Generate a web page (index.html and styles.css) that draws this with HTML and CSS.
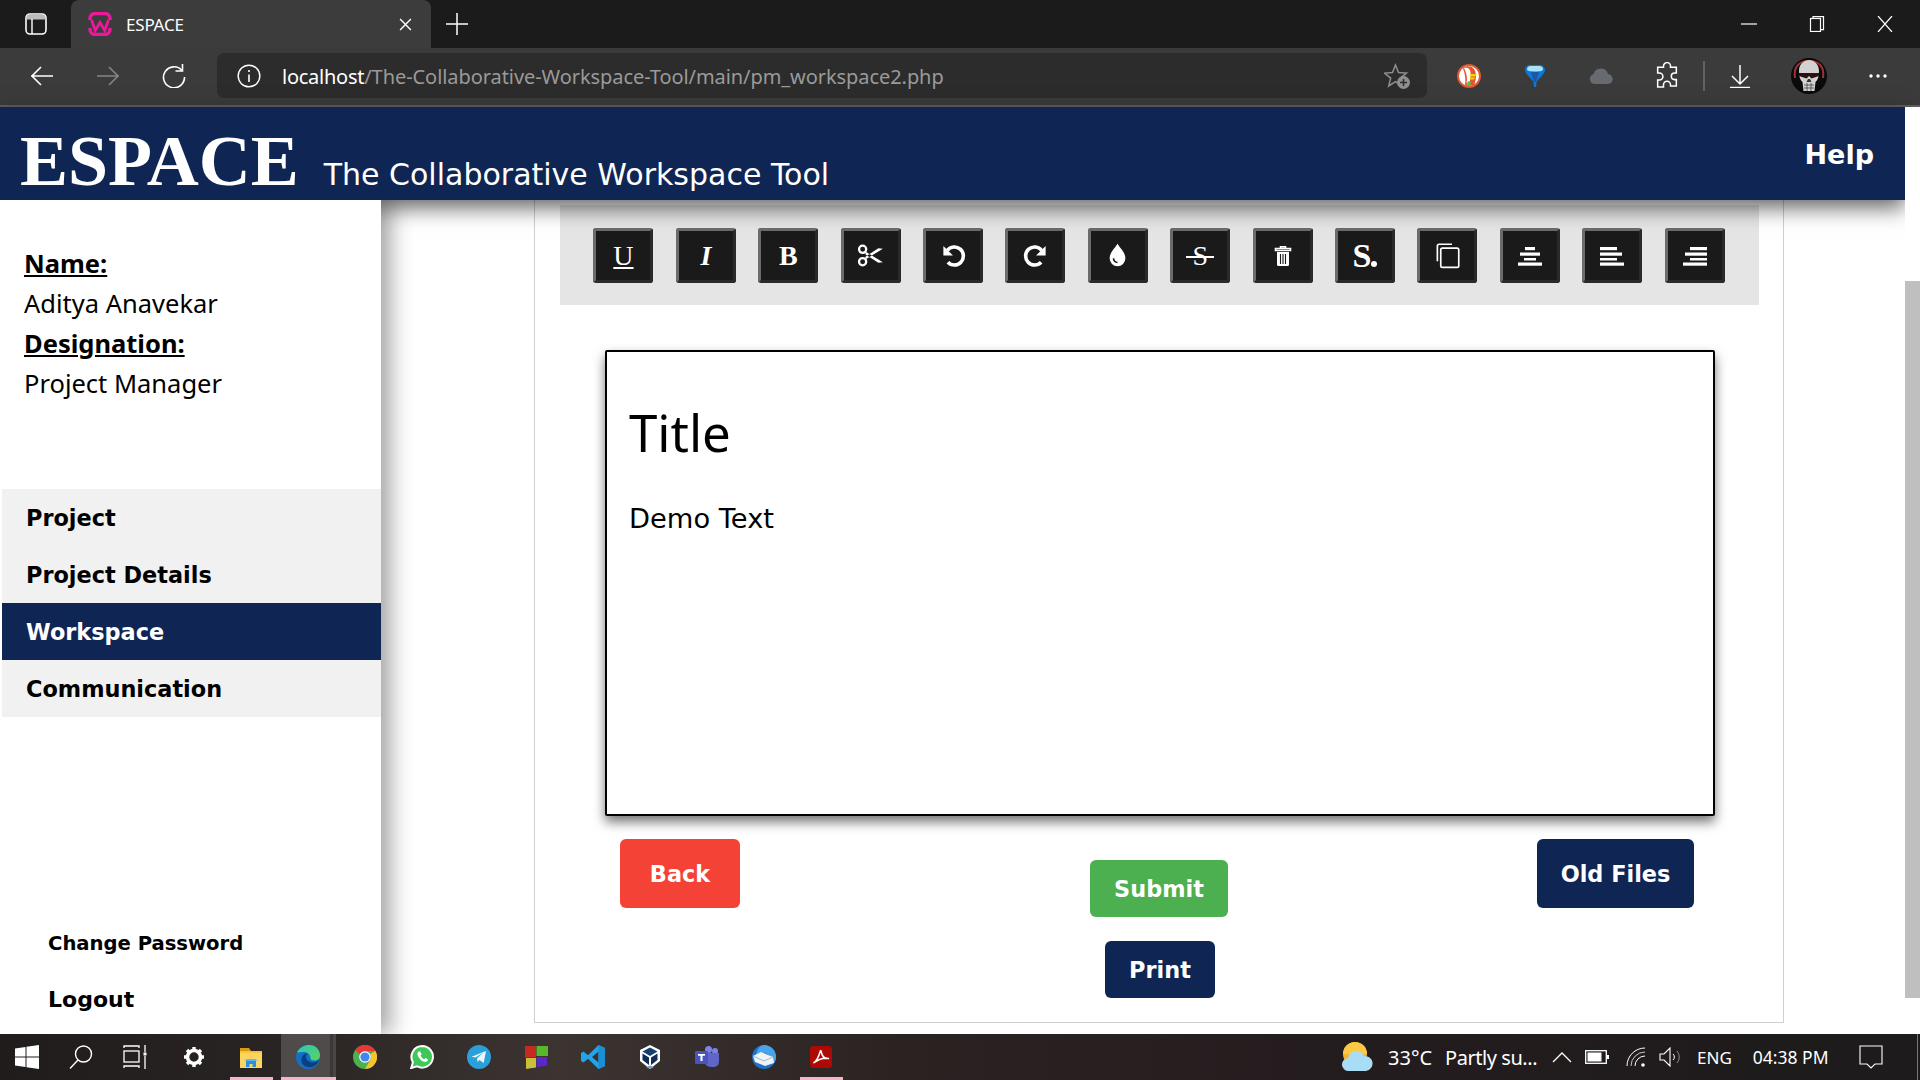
FILE: index.html
```html
<!DOCTYPE html>
<html lang="en">
<head>
<meta charset="utf-8">
<title>ESPACE</title>
<link rel="stylesheet" href="styles.css">
</head>
<body>
<div class="tabbar">
  <div class="tab-toggle"><svg class="i22" viewBox="0 0 24 24"><rect x="2" y="2" width="20" height="20" rx="4" fill="none" stroke="#fff" stroke-width="1.6"/><path d="M2.5 7.5V6a3.5 3.5 0 0 1 3.5-3.5h12A3.5 3.5 0 0 1 21.500 6v1.500z" fill="#bbb"/><path d="M8 7v15" stroke="#fff" stroke-width="1.400"/></svg></div>
  <div class="tab">
    <svg class="favicon" viewBox="0 0 24 24"><path d="M2 8V6.500A5 5 0 0 1 7 1.500h10a5 5 0 0 1 5 5V8M2 16v1.500a5 5 0 0 0 5 5h10a5 5 0 0 0 5-5V16" fill="none" stroke="#ec1a9a" stroke-width="3.400"/><path d="M3.500 8l3.800 10.500 4.700-8 4.700 8L20.500 8" fill="none" stroke="#ec1a9a" stroke-width="2.800"/></svg>
    <span class="tab-title">ESPACE</span>
    <svg class="tab-close" viewBox="0 0 12 12"><path d="M1 1l10 10M11 1L1 11" stroke="#fff" stroke-width="1.300"/></svg>
  </div>
  <svg class="tab-plus" viewBox="0 0 24 24"><path d="M12 1v22M1 12h22" stroke="#fff" stroke-width="1.500"/></svg>
  <div class="win-controls">
    <span class="win-btn"><svg class="i16" viewBox="0 0 16 16"><path d="M0 8h16" stroke="#fff" stroke-width="1.200"/></svg></span>
    <span class="win-btn"><svg class="i16" viewBox="0 0 16 16"><rect x="1.500" y="2.500" width="10" height="13" fill="#1b1b1b" stroke="#fff" stroke-width="1.200"/><path d="M4 2.500V.6h10.500v13h-3" fill="none" stroke="#fff" stroke-width="1.200"/></svg></span>
    <span class="win-btn"><svg class="i16" viewBox="0 0 16 16"><path d="M1 0l14 16M15 0L1 16" stroke="#fff" stroke-width="1.200"/></svg></span>
  </div>
</div>

<div class="toolbar">
  <span class="tool"><svg class="i24" viewBox="0 0 24 24"><path d="M23 12H1M11 3l-9 9 9 9" fill="none" stroke="#fff" stroke-width="1.600"/></svg></span>
  <span class="tool"><svg class="i24" viewBox="0 0 24 24"><path d="M1 12h22M13 3l9 9-9 9" fill="none" stroke="#858585" stroke-width="1.600"/></svg></span>
  <span class="tool"><svg class="i24" viewBox="0 0 24 24"><path d="M20 6.500A10.500 10.500 0 1 0 22.500 13" fill="none" stroke="#fff" stroke-width="1.600"/><path d="M20.500 0v7h-7" fill="none" stroke="#fff" stroke-width="1.600"/></svg></span>
  <div class="address">
    <svg class="i24" viewBox="0 0 24 24"><circle cx="12" cy="12" r="10.800" fill="none" stroke="#fff" stroke-width="1.400"/><path d="M12 10.500V18M12 6v2" stroke="#fff" stroke-width="1.600"/></svg>
    <span class="url"><span class="url-host">localhost</span>/The-Collaborative-Workspace-Tool/main/pm_workspace2.php</span>
    <svg class="star" viewBox="0 0 26 26"><path d="M11.500 2l3 7.500 8 .6-6.200 5 2 7.900-6.800-4.300-6.800 4.300 2-7.900-6.200-5 8-.6z" fill="none" stroke="#8f8f8f" stroke-width="1.500"/><circle cx="19.500" cy="19.500" r="6.500" fill="#8f8f8f"/><path d="M19.500 16v7M16 19.500h7" stroke="#2c2c2c" stroke-width="1.500"/></svg>
  </div>
  <span class="tool tool-first"><svg class="i24" viewBox="0 0 24 24"><circle cx="12" cy="12" r="12" fill="#de5833"/><circle cx="12" cy="12" r="10" fill="#fff"/><path d="M6 4.500c3-3 8-3 10.500 0 3 3 3.500 10 .5 17H8C9 15 8 10 6 4.500z" fill="#de5833"/><path d="M7 4c3-1 6 0 6.500 4 .5 4 0 8-1.500 11H9.500C11 14 9 8 7 4z" fill="#fff"/><path d="M13 10h7l-2 2.500h-5zM13 13.500h5l-1 2h-4z" fill="#fdd20a"/><path d="M9.500 19.500l2-2.500 2.500 1-1 4H10z" fill="#65bc46"/></svg></span>
  <span class="tool"><svg class="i24" viewBox="0 0 24 24"><path d="M2 6a5 5 0 0 1 5-5h10a5 5 0 0 1 5 5c0 4-6 8-8.500 12L13 23h-2l-.5-5C8 14 2 10 2 6z" fill="#0f78d6"/><path d="M4 5.500A3.500 3.500 0 0 1 7.500 2h9A3.500 3.500 0 0 1 20 5.500c0 1-2 2-8 2s-8-1-8-2z" fill="#a6e4fb"/><path d="M8 8h8l-3 10h-2z" fill="#1d57a8"/></svg></span>
  <span class="tool"><svg class="i24" viewBox="0 0 24 24"><path d="M5.500 20A5 5 0 0 1 4.500 10.200 7.500 7.500 0 0 1 19 10a5 5 0 0 1-.5 10z" fill="#676a6e"/></svg></span>
  <span class="tool"><svg class="puzzle" viewBox="0 0 24 24"><path d="M9 5V4a3 3 0 0 1 6 0v1h5v5h-1.500a2.800 2.800 0 0 0 0 5.600H20V21h-5v-1a3 3 0 0 0-6 0v2H4v-6h1.500a3 3 0 0 0 0-6H4V5z" fill="none" stroke="#fff" stroke-width="1.300" transform="translate(0 -.5)"/></svg></span>
  <span class="tool-sep"></span>
  <span class="tool"><svg class="i24" viewBox="0 0 24 24"><path d="M12 1v18M4 12l8 8 8-8" fill="none" stroke="#fff" stroke-width="1.500"/><path d="M2 23.500h20" stroke="#fff" stroke-width="1.500"/></svg></span>
  <span class="tool tool-gap"><svg class="avatar" viewBox="0 0 36 36"><circle cx="18" cy="18" r="18" fill="#0a0a0a"/><path d="M4 20C2 8 9 3 18 3s16 5 14 17" fill="none" stroke="#a03232" stroke-width="2"/><path d="M8 13C8 6 13 2 18 2s10 4 10 11c0 5-1 9-3.500 11l-1 9h-11l-1-9C9 22 8 18 8 13z" fill="#d2d2d2"/><path d="M8 15h20v3l-7.500 2.500L18 18l-2.500 2.500L8 18z" fill="#2a1212"/><path d="M17 21h2l1.500 3h-5z" fill="#333"/><path d="M13 27h10M13 30h10M16 25v8M20 25v8" stroke="#555" stroke-width=".9"/></svg></span>
  <span class="tool tool-gap"><svg class="i24" viewBox="0 0 24 24"><circle cx="5" cy="12" r="1.700" fill="#fff"/><circle cx="12" cy="12" r="1.700" fill="#fff"/><circle cx="19" cy="12" r="1.700" fill="#fff"/></svg></span>
</div>

<div class="app">
  <div class="page">
    <header class="site-header">
      <h1 class="brand">ESPACE</h1>
      <span class="tagline">The Collaborative Workspace Tool</span>
      <a class="help">Help</a>
    </header>
    <div class="layout">
      <aside class="sidebar">
        <div class="profile">
          <div class="profile-label">Name:</div>
          <div>Aditya Anavekar</div>
          <div class="profile-label">Designation:</div>
          <div>Project Manager</div>
        </div>
        <nav class="nav">
          <a class="nav-item">Project</a>
          <a class="nav-item">Project Details</a>
          <a class="nav-item nav-active">Workspace</a>
          <a class="nav-item">Communication</a>
        </nav>
        <div class="side-foot">
          <a class="foot-small">Change Password</a>
          <a class="foot-large">Logout</a>
        </div>
      </aside>
      <main class="main">
        <section class="box">
          <div class="format-bar">
            <button class="fmt fmt-u">U</button>
            <button class="fmt fmt-i">I</button>
            <button class="fmt fmt-b">B</button>
            <button class="fmt"><svg class="i26" viewBox="0 0 24 24"><g fill="none" stroke="#fff" stroke-width="2"><circle cx="5" cy="6.500" r="3.200"/><circle cx="5" cy="17.500" r="3.200"/></g><path d="M7.500 8.500L23 18l-4 .5L7.500 11zM7.500 15.500L23 6l-4-.5L7.500 13z" fill="#fff"/></svg></button>
            <button class="fmt"><svg class="i26" viewBox="0 0 24 24"><path d="M6.500 7.500A8 8 0 1 1 7 18" fill="none" stroke="#fff" stroke-width="3.200"/><path d="M3 3.500v8.500h8.500z" fill="#fff"/></svg></button>
            <button class="fmt"><svg class="i26 flip" viewBox="0 0 24 24"><path d="M6.500 7.500A8 8 0 1 1 7 18" fill="none" stroke="#fff" stroke-width="3.200"/><path d="M3 3.500v8.500h8.500z" fill="#fff"/></svg></button>
            <button class="fmt"><svg class="i26" viewBox="0 0 24 24"><path d="M12 1.500c2.800 4.500 7 8 7 13a7 7 0 0 1-14 0c0-5 4.200-8.500 7-13z" fill="#fff"/><path d="M8.500 14.500a3.500 3.500 0 0 0 3.500 3.700" fill="none" stroke="#1a1a1a" stroke-width="1.400"/></svg></button>
            <button class="fmt"><span class="fmt-strike">S</span></button>
            <button class="fmt"><svg class="i24" viewBox="0 0 24 24"><path d="M9.500 4V2.800h5V4M4.500 4.500h15v2h-15z" fill="none" stroke="#fff" stroke-width="1.600"/><path d="M6 8h12v12.500a1.500 1.500 0 0 1-1.500 1.500h-9A1.500 1.500 0 0 1 6 20.500z" fill="#fff"/><path d="M9.500 10v10M12 10v10M14.500 10v10" stroke="#1a1a1a" stroke-width="1.100"/></svg></button>
            <button class="fmt fmt-sd">S<span class="fmt-dot"></span></button>
            <button class="fmt"><svg class="i26" viewBox="0 0 24 24" fill="none" stroke="#fff" stroke-width="1.500"><path d="M3 17V3.500A1.500 1.500 0 0 1 4.500 2H16"/><rect x="6" y="5.500" width="16" height="17" rx="1.500"/></svg></button>
            <button class="fmt"><svg class="i24" viewBox="0 0 24 24" fill="#fff"><rect x="7" y="3" width="10" height="3.200"/><rect x="2" y="8.500" width="20" height="3.200"/><rect x="6" y="14" width="12" height="2.500"/><rect x="0" y="18.500" width="24" height="3.200"/></svg></button>
            <button class="fmt"><svg class="i24" viewBox="0 0 24 24" fill="#fff"><rect x="0" y="3" width="17" height="3.200"/><rect x="0" y="8.500" width="22" height="3.200"/><rect x="0" y="14" width="17" height="2.500"/><rect x="0" y="18.500" width="24" height="3.200"/></svg></button>
            <button class="fmt"><svg class="i24" viewBox="0 0 24 24" fill="#fff"><rect x="7" y="3" width="17" height="3.200"/><rect x="2" y="8.500" width="22" height="3.200"/><rect x="7" y="14" width="17" height="2.500"/><rect x="0" y="18.500" width="24" height="3.200"/></svg></button>
          </div>
          <div class="editor">
            <div class="editor-title">Title</div>
            <div class="editor-text">Demo Text</div>
          </div>
          <div class="actions">
            <button class="btn btn-back">Back</button>
            <button class="btn btn-submit">Submit</button>
            <button class="btn btn-old">Old Files</button>
          </div>
          <button class="btn btn-print">Print</button>
        </section>
      </main>
    </div>
  </div>
  <div class="scrollbar"><div class="thumb"></div></div>
</div>

<footer class="taskbar">
  <span class="task task-sys"><svg class="i24" viewBox="0 0 24 24" fill="#fff"><path d="M0 3.500l10.500-1.500v9.500H0zM11.500 1.800L24 0v11.500H11.500zM0 12.500h10.500V22L0 20.500zM11.500 12.500H24V24l-12.500-1.800z"/></svg></span>
  <span class="task task-sys"><svg class="i24" viewBox="0 0 24 24" fill="none" stroke="#fff" stroke-width="1.400"><circle cx="14.500" cy="9" r="8"/><path d="M9 15L1 23.500"/></svg></span>
  <span class="task task-sys"><svg class="i24" viewBox="0 0 24 24" fill="none" stroke="#fff" stroke-width="1.300"><path d="M1 3V1h15v2M1 23v-2h15v2"/><rect x="1" y="6" width="15" height="11"/><path d="M22 0v7M22 11v13"/><rect x="20.500" y="7.500" width="3" height="3" fill="#fff" stroke="none"/></svg></span>
  <span class="task task-gear"><svg class="i24" viewBox="0 0 24 24"><circle cx="12" cy="12" r="6.500" fill="none" stroke="#fff" stroke-width="3.600"/><path d="M12 2v3M12 19v3M2 12h3M19 12h3M5 5l2 2M17 17l2 2M19 5l-2 2M7 17l-2 2" stroke="#fff" stroke-width="3.400"/></svg></span>
  <span class="task task-open"><svg class="i24" viewBox="0 0 24 24"><path d="M1 3h9l2 3H1z" fill="#d99b14"/><path d="M1 6h22v17H1z" fill="#fcd45f"/><path d="M1 6h22v2H1z" fill="#f5c53c"/><path d="M7 22v-6h10v6h-3.500v-3h-3v3z" fill="#2b8fdc"/><path d="M5.500 16l2-2h9l2 2z" fill="#60b7ef"/></svg></span>
  <span class="task task-edge task-open"><svg class="i24" viewBox="0 0 24 24"><defs><linearGradient id="edgeA" x1="0" y1="0" x2="1" y2="1"><stop offset="0" stop-color="#32c4b4"/><stop offset="1" stop-color="#5ad35f"/></linearGradient></defs><circle cx="12" cy="12" r="12" fill="#1171c9"/><path d="M1 7.500C4 1.500 10 0 13 0c7 0 11 5 11 10.500 0 3-2.500 5-5.500 5-2 0-4-1-4-2 0-4-3-6.500-6.500-6.500-3.500 0-6 1-7 0z" fill="url(#edgeA)"/><path d="M11 22c-4-1-6.500-5-5.500-9 1-3 3.500-5 6-4.500-1.500 1.500-2 3.500-1 5.500 1.500 3 5.500 4 8.500 3 1.500-.5 3-1.500 4-2.500-1 4-5 9-12 7.500z" fill="#0c3f82"/></svg></span>
  <span class="task"><svg class="i24" viewBox="0 0 24 24"><circle cx="12" cy="12" r="12" fill="#4caf50"/><path d="M12 0a12 12 0 0 1 10.400 6H12a6 6 0 0 0-5.200 3L2.100 5.300A12 12 0 0 1 12 0z" fill="#e53935"/><path d="M22.400 6A12 12 0 0 1 12 24l5.200-9A6 6 0 0 0 17.200 9z" fill="#fbc02d"/><circle cx="12" cy="12" r="5.800" fill="#fff"/><circle cx="12" cy="12" r="4.600" fill="#4285f4"/></svg></span>
  <span class="task"><svg class="i24" viewBox="0 0 24 24"><path d="M12.200 1a10.800 10.800 0 0 0-9.300 16.200L1.200 23l6-1.600A10.800 10.800 0 1 0 12.200 1z" fill="#3ec85a" stroke="#fff" stroke-width="2"/><path d="M8.500 6.500c-1.300 1-1.500 3 0 5.500 1.500 2.500 4 5 6.500 5 1.500 0 3-1 3-2.500l-2.500-1.500-1.300 1.200c-1.500-.5-3-2-3.700-3.700l1.200-1.300-1.500-2.700z" fill="#fff"/></svg></span>
  <span class="task"><svg class="i24" viewBox="0 0 24 24"><circle cx="12" cy="12" r="12" fill="#2b9fd8"/><path d="M4.500 11.800L19 6l-2.300 12-4.200-3-2 2-.4-3.800 6.400-5.700-8 5z" fill="#eaf6fb"/></svg></span>
  <span class="task"><svg class="i24" viewBox="0 0 24 24"><path d="M1 1h11v11.500H1z" fill="#c62a20"/><path d="M12.500 1H24v10H12.500z" fill="#58b82c"/><path d="M2 13h10v9.500L2 24z" fill="#c9bf3a"/><path d="M12.500 12H23v8.500l-10.500 1.800z" fill="#5b27c7"/></svg></span>
  <span class="task"><svg class="i24" viewBox="0 0 24 24"><path d="M17.500 0L24 3v18l-6.500 3L7 13.800 2.500 17.500 0 16V8l2.500-1.500L7 10.200zM17.500 6.500L11 12l6.500 5.500z" fill="#23a3ea"/><path d="M17.500 0L24 3v18l-6.500 3z" fill="#1a8fd6"/></svg></span>
  <span class="task"><svg class="i24" viewBox="0 0 24 24"><path d="M12 0l10 5v11l-10 8-10-8V5z" fill="#fff"/><path d="M4.500 6.500L12 2.500l7.500 4L12 11z" fill="#173f6e"/><path d="M4.500 8.500L11 12.500v7.500l-6.500-5zM19.500 8.500L13 12.500v7.500l6.500-5z" fill="#0e2c55"/><path d="M8 22l4 2 4-2-4-1.500z" fill="#7e9cc6"/></svg></span>
  <span class="task"><svg class="i24" viewBox="0 0 24 24"><circle cx="20" cy="6" r="3" fill="#7b83eb"/><circle cx="13.500" cy="4.500" r="3.500" fill="#7b83eb"/><path d="M9 8h15v9a5 5 0 0 1-5 5h-3a7 7 0 0 1-7-7z" fill="#5f66c8"/><rect x="0" y="6" width="13" height="13" rx="1.200" fill="#4b53bc"/><path d="M3 9h7v1.800H7.500V16h-2v-5.200H3z" fill="#fff"/></svg></span>
  <span class="task"><svg class="i24" viewBox="0 0 24 24"><circle cx="12" cy="12" r="12" fill="#1f6fc4"/><path d="M12 0a12 12 0 0 1 12 12c0 3-1 5-2 6-1-5-5-9-10-10-3-.5-6 0-8 2C5 4 8 0 12 0z" fill="#4aa3e8"/><path d="M1 11l8-4 12 5 1 6-9 3-10-4z" fill="#eef3f8"/><path d="M1 11l11 5 9-4" fill="none" stroke="#a9b8c7" stroke-width="1"/></svg></span>
  <span class="task task-open"><svg class="i24" viewBox="0 0 24 24"><rect x="1" y="1" width="22" height="22" rx="3.500" fill="#ad0a06"/><path d="M4.500 18c2.500-1.500 5-5.500 6.500-11 .5-2 1-2 1.300 0 .7 4 3 7 7.700 6.500-4.500-1-11 1-15.500 4.500z" fill="none" stroke="#fff" stroke-width="1.500"/></svg></span>
  <div class="tray">
    <svg class="weather" viewBox="0 0 32 32"><circle cx="14" cy="13" r="12" fill="#f7b52b"/><path d="M2 13a12 12 0 0 1 24 0z" fill="#fbc945"/><path d="M8 30a6.500 6.500 0 0 1-1-13 8.500 8.500 0 0 1 16-2 7.500 7.500 0 0 1 2 15z" fill="#a9dcf5"/></svg>
    <span class="temp">33°C</span>
    <span class="cond">Partly su...</span>
    <svg class="tray-chev" viewBox="0 0 20 12"><path d="M1 11l9-9 9 9" fill="none" stroke="#fff" stroke-width="1.300"/></svg>
    <svg class="tray-batt" viewBox="0 0 24 14"><rect x=".7" y=".7" width="20.600" height="12.600" fill="none" stroke="#fff" stroke-width="1.300"/><rect x="2.500" y="2.500" width="14" height="9" fill="#fff"/><rect x="22" y="5" width="2" height="4" fill="#fff"/></svg>
    <svg class="tray-wifi" viewBox="0 0 20 20"><g fill="none" stroke="#fff" stroke-width="1"><path d="M1 19A18 18 0 0 1 19 1"/><path d="M5 19A14 14 0 0 1 19 5" opacity=".75"/><path d="M9 19A10 10 0 0 1 19 9"/></g><circle cx="17" cy="18" r="1.800" fill="#fff"/></svg>
    <svg class="tray-vol" viewBox="0 0 22 20"><path d="M1 7h4l6-6v18l-6-6H1z" fill="none" stroke="#fff" stroke-width="1.100"/><path d="M14 7a4 4 0 0 1 0 6" fill="none" stroke="#fff"/><path d="M18 4a9 9 0 0 1 0 12" fill="none" stroke="#888"/></svg>
    <span class="eng">ENG</span>
    <span class="clock">04:38 PM</span>
    <svg class="tray-note" viewBox="0 0 24 24"><path d="M1 1h22v18h-7l-4 4-4-4H1z" fill="none" stroke="#fff" stroke-width="1.100"/></svg>
    <span class="show-desk"></span>
  </div>
</footer>
</body>
</html>
```
FILE: styles.css
```css
* { box-sizing: border-box; }
html, body { margin: 0; height: 100%; }
body {
  width: 1920px; height: 1080px; overflow: hidden;
  display: flex; flex-direction: column;
  background: #fff; color: #000;
  font-family: "Noto Sans", sans-serif;
}
svg { display: block; flex: none; }
.i16 { width: 16px; height: 16px; }
.i22 { width: 24px; height: 24px; }
.i24 { width: 24px; height: 24px; }
.i26 { width: 27px; height: 27px; }
.puzzle { width: 28px; height: 28px; }
.flip { transform: scaleX(-1); }

.tabbar { height: 48px; flex: none; display: flex; align-items: center; background: #1b1b1b; }
.tab-toggle { width: 71px; display: flex; justify-content: center; padding-right: 0; }
.tab {
  width: 360px; height: 48px; background: #3c3c3c; border-radius: 8px 8px 0 0;
  display: flex; align-items: center; padding-left: 17px; color: #fff;
}
.favicon { width: 24px; height: 24px; }
.tab-title { margin-left: 14px; font-size: 17px; letter-spacing: -.2px; }
.tab-close { width: 13px; height: 13px; margin-left: auto; margin-right: 19px; }
.tab-plus { width: 24px; height: 24px; margin-left: 14px; }
.win-controls { margin-left: auto; display: flex; margin-right: 1px; }
.win-btn { width: 68px; display: flex; justify-content: center; }

.toolbar {
  height: 59px; flex: none; display: flex; align-items: center; padding: 0 0 2px 9px;
  background: #3b3b3b; border-bottom: 2px solid #5f5f5f;
}
.tool { width: 66px; display: flex; justify-content: center; flex: none; }
.tool-first { margin-left: 9px; }
.tool-gap { margin-left: 3px; }
.tool-sep { width: 7px; height: 30px; flex: none; display: flex; justify-content: center; }
.tool-sep::before { content: ""; width: 2px; background: #636363; }
.avatar { width: 36px; height: 36px; }
.address {
  width: 1210px; height: 45px; margin-left: 10px; flex: none; padding: 0 17px 0 20px;
  display: flex; align-items: center; background: #2c2c2c; border-radius: 7px; color: #a0a0a0;
}
.url { margin: 2px 0 0 21px; font-size: 20px; letter-spacing: -.07px; white-space: nowrap; color: #9a9a9a; }
.url-host { color: #fff; letter-spacing: -.25px; }
.star { width: 26px; height: 26px; margin-left: auto; }

.app { flex: 1; min-height: 0; display: flex; }
.page { width: 1905px; flex: none; display: flex; flex-direction: column; min-height: 0; }
.scrollbar { width: 15px; flex: none; background: #fff; position: relative; z-index: 3; padding-top: 174px; }
.thumb { height: 717px; background: #bfbfbf; }

.site-header {
  height: 93px; flex: none; display: flex; align-items: flex-end; position: relative; z-index: 2;
  background: #0f2654; color: #fff; padding: 0 31px 0 20px;
  box-shadow: 0 8px 20px rgba(0,0,0,.6);
}
.brand { margin: 0 0 -1px; font: bold 72px/80px "Liberation Serif", serif; }
.tagline { margin: 0 0 5px 25px; font: 30px/40px "DejaVu Sans", sans-serif; }
.help { margin: 0 0 25px auto; font: bold 27px/40px "DejaVu Sans", sans-serif; }

.layout { flex: 1; min-height: 0; display: flex; }
.sidebar {
  width: 381px; flex: none; display: flex; flex-direction: column; background: #fff; position: relative; z-index: 3;
  box-shadow: 10px 0 20px rgba(0,0,0,.35);
  clip-path: inset(0 -60px 0 0);
}
.profile { padding: 43px 0 0 24px; font-size: 25.5px; line-height: 40px; }
.profile-label { font-weight: 700; text-decoration: underline; }
.nav { margin: 86px 0 0 2px; display: flex; flex-direction: column; }
.nav-item {
  height: 57px; padding-left: 24px; display: flex; align-items: center;
  background: #f1f1f1; font: bold 22.4px "DejaVu Sans", sans-serif;
}
.nav-active { background: #0f2654; color: #fff; }
.side-foot { margin-top: auto; padding: 0 0 7px 48px; display: flex; flex-direction: column; font-family: "DejaVu Sans", sans-serif; font-weight: 700; }
.foot-small { height: 55px; display: flex; align-items: center; font-size: 19.6px; }
.foot-large { height: 56px; display: flex; align-items: center; font-size: 22px; }

.main { flex: 1; min-width: 0; padding-left: 153px; background: #fff; }
.box {
  width: 1250px; height: 823px; padding-top: 5px; display: flex; flex-direction: column; align-items: center;
  border: 1px solid #cfcfcf; border-top: 0;
}
.format-bar {
  width: 1199px; height: 100px; flex: none; background: #e5e5e5;
  display: flex; align-items: center; justify-content: center; gap: 22.4px; padding-top: 1px;
}
.fmt {
  width: 60px; height: 55px; padding: 0; flex: none; display: flex; align-items: center; justify-content: center;
  background: #1a1a1a; color: #fff; border: 3px solid; border-color: #6b6b6b #2a2a2a #2a2a2a #6b6b6b; border-radius: 3px;
  font: bold 28px "Liberation Serif", serif;
}
.fmt-u { text-decoration: underline; font-weight: 400; }
.fmt-i { font-style: italic; }
.fmt-strike { position: relative; font-weight: 400; font-size: 28px; line-height: 30px; }
.fmt-strike::after { content: ""; position: absolute; left: -6px; right: -6px; top: 15px; height: 2px; background: #fff; }
.fmt-sd { font: 900 34px "Liberation Serif", serif; align-items: baseline; padding-top: 6px; }
.fmt-dot { width: 6px; height: 6px; border-radius: 50%; background: #fff; }

.editor {
  width: 1110px; height: 466px; margin: 45px 0 0 2px; flex: none; padding: 0 22px;
  background: #fff; border: 2px solid #000; border-radius: 2px;
  box-shadow: 0 6px 12px rgba(0,0,0,.55);
}
.editor-title { margin-top: 56px; font-size: 51px; line-height: 48px; height: 48px; }
.editor-text { margin-top: 43px; font: 27.3px/40px "DejaVu Sans", sans-serif; }

.actions {
  width: 1078px; margin-top: 23px; flex: none; display: grid; grid-template-columns: 1fr auto 1fr; align-items: start;
}
.btn {
  border: 0; border-radius: 6px; color: #fff; padding: 0; height: 57px;
  font: bold 22.4px "DejaVu Sans", sans-serif;
}
.btn-back { width: 120px; height: 69px; justify-self: start; background: #f44336; }
.btn-submit { width: 138px; margin-top: 21px; background: #4caf50; }
.btn-old { width: 157px; height: 69px; justify-self: end; margin-right: 4px; background: #0f2654; }
.btn-print { width: 110px; margin: 24px 0 0 2px; flex: none; background: #0f2654; }

.taskbar {
  height: 46px; flex: none; display: flex; align-items: center; position: relative; z-index: 4;
  background: linear-gradient(90deg, #201c1c 0, #2a2524 300px, #3c3431 560px, #2b2322 900px, #241c1e 1300px, #1d1b1b 1900px);
  color: #fff;
}
.task { width: 57px; height: 46px; flex: none; display: flex; align-items: center; justify-content: center; position: relative; }
.task-sys { width: 54px; }
.task-gear { margin-left: 3px; }
.task-open::after { content: ""; position: absolute; left: 8px; right: 6px; bottom: 0; height: 3px; background: #f7b3cb; }
.task-edge { background: linear-gradient(90deg, transparent 2px, #4f4b4a 2px, #4f4b4a 51px, #3b3736 51px, #3b3736 54px, #4a4645 54px); }
.task-edge::after { left: 2px; right: 0; }
.tray { margin-left: auto; width: 585px; display: flex; align-items: center; flex: none; height: 46px; position: relative; }
.weather { width: 32px; height: 32px; margin-left: 6px; }
.temp { margin-left: 15px; font-size: 20px; }
.cond { margin-left: 13px; font-size: 20px; white-space: nowrap; letter-spacing: -.45px; }
.tray-chev { width: 20px; height: 12px; margin-left: 15px; }
.tray-batt { width: 24px; height: 14px; margin-left: 13px; }
.tray-wifi { width: 20px; height: 20px; margin-left: 17px; }
.tray-vol { width: 22px; height: 20px; margin-left: 13px; }
.eng { margin-left: 16px; font-size: 17px; }
.clock { margin-left: 21px; font-size: 17.5px; white-space: nowrap; }
.tray-note { width: 24px; height: 24px; margin-left: 30px; }
.show-desk { position: absolute; right: 2px; top: 0; bottom: 0; width: 1px; background: #777; }
```
